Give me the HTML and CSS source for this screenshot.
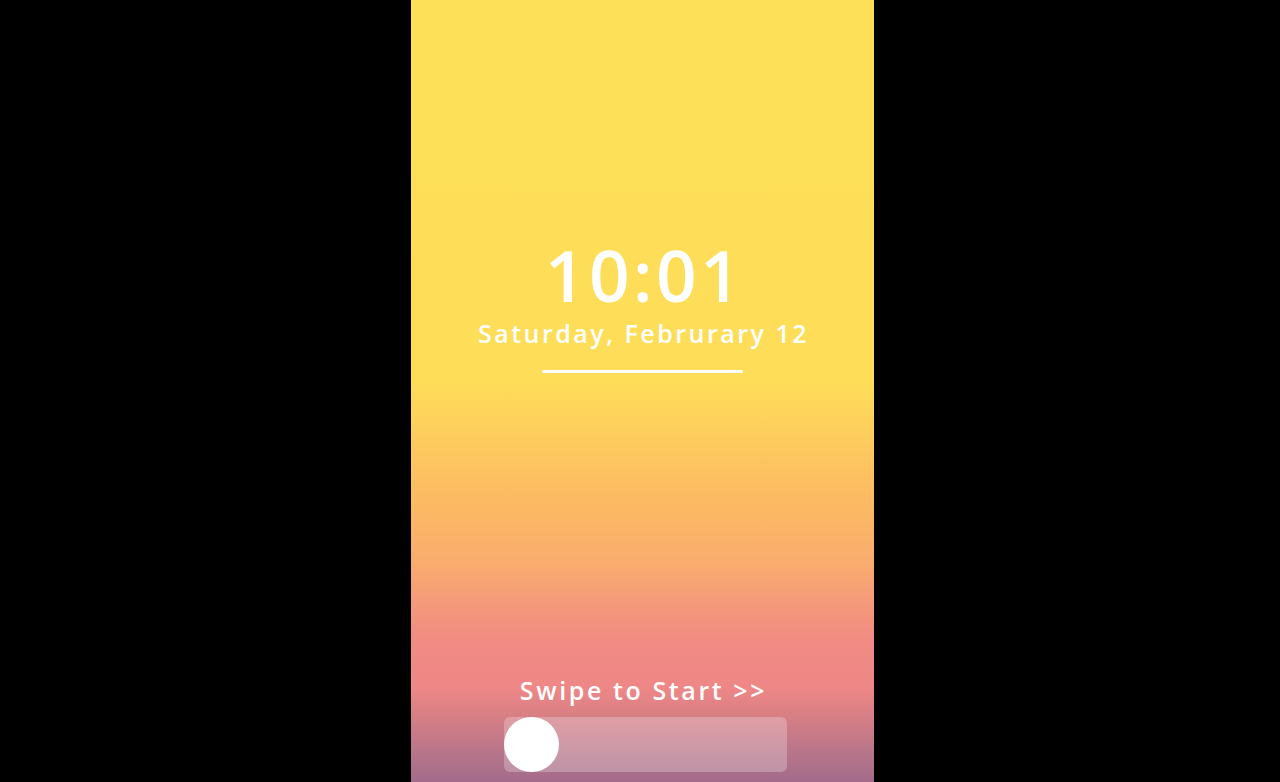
FILE: index.html
```html
<!DOCTYPE html>
<html>
<head>
<meta charset="utf-8">
<link rel="stylesheet" href="styles.css">
</head>
<body>
<div class="phone">
  <div class="clock">
    <div class="time">10:01</div>
    <div class="date">Saturday, Februrary 12</div>
    <div class="rule"></div>
  </div>
  <div class="bottom">
    <div class="swipe-text">Swipe to Start &gt;&gt;</div>
    <div class="track"><div class="knob"></div></div>
  </div>
</div>
</body>
</html>
```
FILE: styles.css
```css
html, body {
  margin: 0;
  padding: 0;
  background: #000;
  height: 100%;
}
body {
  display: flex;
  font-family: "Open Sans", "Noto Sans", sans-serif;
}
.phone {
  margin-left: 411px;
  width: 463px;
  height: 782px;
  display: flex;
  flex-direction: column;
  align-items: center;
  justify-content: space-between;
  background: linear-gradient(to bottom,
    #fee058 0%,
    #fedd58 49%,
    #fdc061 61%,
    #fcb566 67%,
    #f9ac6e 72%,
    #f59a7a 77%,
    #f18b83 82%,
    #ee8786 88%,
    #d47e85 92%,
    #b9768a 96%,
    #a36b8a 100%);
  color: #fff;
}
.clock {
  display: flex;
  flex-direction: column;
  align-items: center;
  padding-top: 233px;
}
.time {
  font-size: 71px;
  line-height: 84px;
  font-weight: 600;
  letter-spacing: 3.5px;
  margin-left: 4px;
}
.date {
  font-size: 25px;
  line-height: 32px;
  font-weight: 600;
  letter-spacing: 2.5px;
  margin-left: 2px;
}
.rule {
  width: 201px;
  height: 3px;
  background: #fff;
  margin-top: 21px;
  border-radius: 2px;
}
.bottom {
  display: flex;
  flex-direction: column;
  align-items: center;
  padding-bottom: 10px;
}
.swipe-text {
  font-size: 25px;
  line-height: 30px;
  font-weight: 600;
  letter-spacing: 2.6px;
  margin-left: 2px;
  margin-bottom: 12px;
}
.track {
  width: 283px;
  height: 55px;
  margin-left: 6px;
  border-radius: 6px;
  background: rgba(255, 255, 255, 0.25);
  display: flex;
  align-items: center;
}
.knob {
  width: 55px;
  height: 55px;
  border-radius: 50%;
  background: #fff;
}
```
